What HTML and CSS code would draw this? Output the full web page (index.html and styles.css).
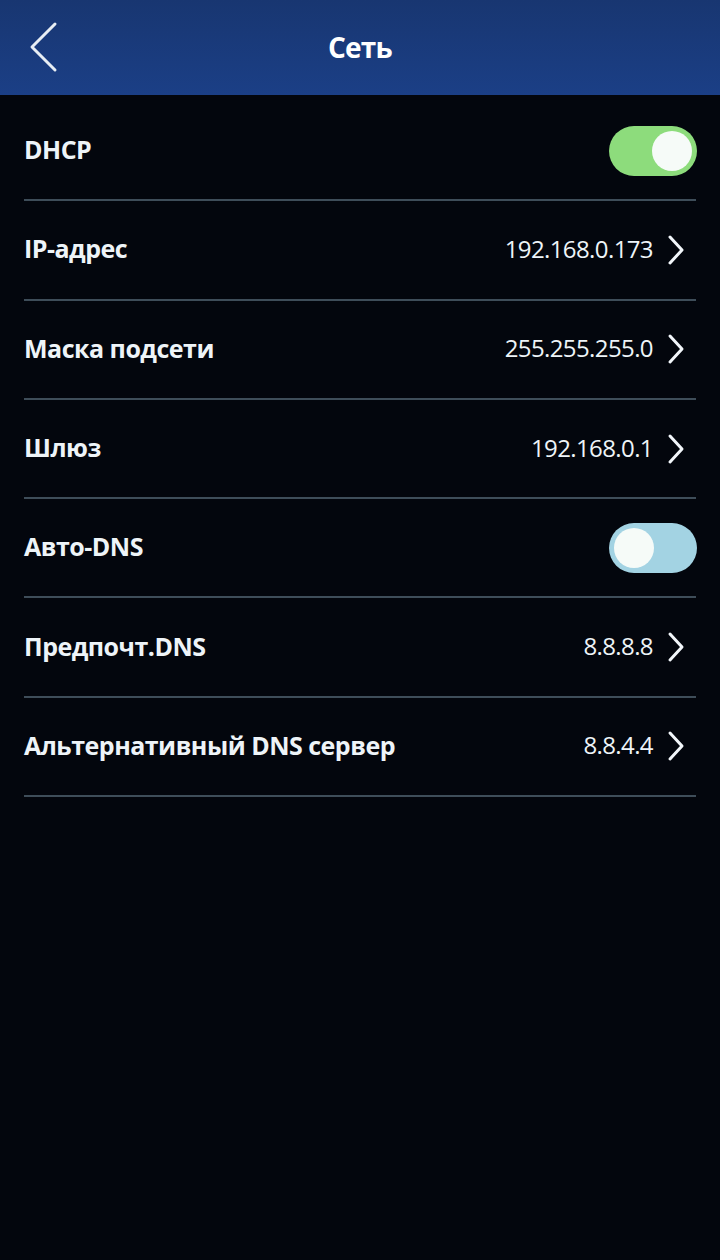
FILE: index.html
```html
<!DOCTYPE html>
<html lang="ru">
<head>
    <meta charset="UTF-8">
    <meta name="viewport" content="width=device-width, initial-scale=1.0">
    <title>Сеть</title>
    <link rel="stylesheet" href="styles.css">
</head>
<body>
    <header class="top-bar">
        <a class="back" href="#" title="Назад">
            <svg width="30" height="52" viewBox="0 0 30 52">
                <path d="M27 3 L4 26 L27 49" fill="none" stroke="#e8eef4" stroke-width="3" stroke-linecap="round" stroke-linejoin="round"/>
            </svg>
        </a>
        <h1>Сеть</h1>
    </header>

    <ul class="settings">
        <li class="row">
            <span class="label">DHCP</span>
            <span class="switch on"><span class="knob"></span></span>
        </li>
        <li class="row">
            <span class="label">IP-адрес</span>
            <span class="value">192.168.0.173</span>
            <svg class="chevron" width="20" height="32" viewBox="0 0 20 32"><path d="M4 3 L16 16 L4 29" /></svg>
        </li>
        <li class="row">
            <span class="label">Маска подсети</span>
            <span class="value">255.255.255.0</span>
            <svg class="chevron" width="20" height="32" viewBox="0 0 20 32"><path d="M4 3 L16 16 L4 29" /></svg>
        </li>
        <li class="row">
            <span class="label">Шлюз</span>
            <span class="value">192.168.0.1</span>
            <svg class="chevron" width="20" height="32" viewBox="0 0 20 32"><path d="M4 3 L16 16 L4 29" /></svg>
        </li>
        <li class="row">
            <span class="label">Авто-DNS</span>
            <span class="switch off"><span class="knob"></span></span>
        </li>
        <li class="row">
            <span class="label">Предпочт.DNS</span>
            <span class="value">8.8.8.8</span>
            <svg class="chevron" width="20" height="32" viewBox="0 0 20 32"><path d="M4 3 L16 16 L4 29" /></svg>
        </li>
        <li class="row">
            <span class="label">Альтернативный DNS сервер</span>
            <span class="value">8.8.4.4</span>
            <svg class="chevron" width="20" height="32" viewBox="0 0 20 32"><path d="M4 3 L16 16 L4 29" /></svg>
        </li>
    </ul>
</body>
</html>
```

FILE: styles.css
```css
html, body {
    height: 100%;
}
body {
    margin: 0;
    background: #03060d;
    color: #eef4f8;
    font-family: "Open Sans", "Noto Sans", sans-serif;
}
.top-bar {
    height: 95px;
    background: linear-gradient(#183671, #1b3f86);
    display: flex;
    align-items: center;
    justify-content: center;
    position: relative;
}
.top-bar h1 {
    margin: 0 0 2px;
    font-size: 28px;
    font-weight: 700;
    letter-spacing: -0.8px;
    color: #ffffff;
}
.back {
    position: absolute;
    left: 28px;
    top: 21px;
    display: block;
}
.back svg {
    display: block;
}
.settings {
    list-style: none;
    margin: 0 24px;
    padding: 7px 0 0;
}
.row {
    height: 97.3px;
    border-bottom: 2px solid #3e4d59;
    display: flex;
    align-items: center;
}
.label {
    flex: 1;
    font-size: 25px;
    font-weight: 700;
    letter-spacing: -0.5px;
    padding-bottom: 3px;
}
.value {
    font-size: 24px;
    font-weight: 400;
    letter-spacing: -0.6px;
    margin-right: 13px;
    padding-bottom: 3px;
}
.chevron {
    display: block;
    margin-right: 10px;
}
.chevron path {
    fill: none;
    stroke: #f2f6fa;
    stroke-width: 3;
    stroke-linecap: round;
    stroke-linejoin: round;
}
.switch {
    width: 88px;
    height: 50px;
    border-radius: 25px;
    position: relative;
    margin-right: -1px;
}
.switch.on {
    background: #8ddc7c;
}
.switch.off {
    background: #a3d3e3;
}
.knob {
    position: absolute;
    top: 5px;
    width: 40px;
    height: 40px;
    border-radius: 50%;
    background: #f6fbf8;
}
.switch.on .knob {
    right: 5px;
}
.switch.off .knob {
    left: 5px;
}
```
